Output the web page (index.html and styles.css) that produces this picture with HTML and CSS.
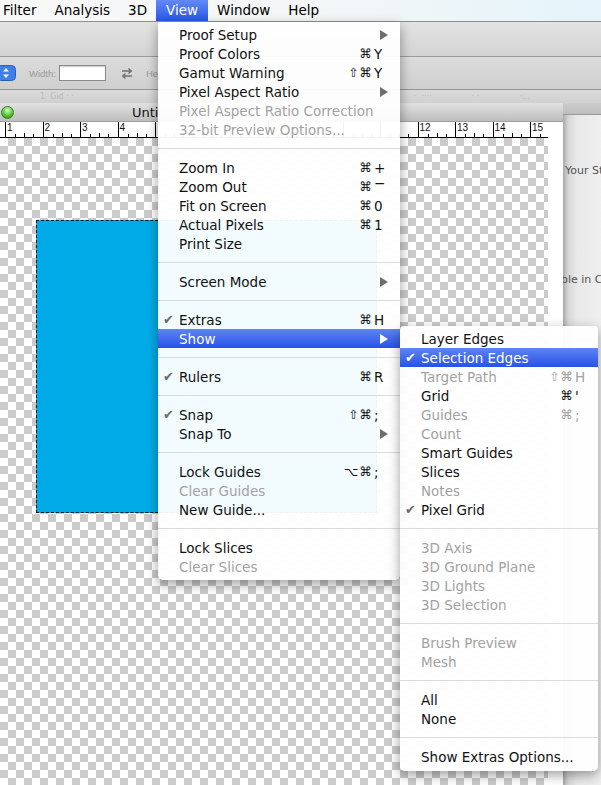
FILE: index.html
```html
<!DOCTYPE html>
<html lang="en">
<head>
    <meta charset="UTF-8">
    <title>View menu</title>
    <link rel="stylesheet" href="styles.css">
</head>
<body>
<div class="screen">

    <!-- menu bar -->
    <div class="menubar">
        <span class="mb-item first">Filter</span>
        <span class="mb-item">Analysis</span>
        <span class="mb-item">3D</span>
        <span class="mb-item active">View</span>
        <span class="mb-item">Window</span>
        <span class="mb-item">Help</span>
    </div>

    <!-- app bars -->
    <div class="appbar"></div>
    <div class="options">
        <span class="stepper">
            <svg width="20" height="16" viewBox="0 0 20 16">
                <rect x="0.5" y="0.5" width="19" height="15" rx="4" fill="#3f80e6" stroke="#2a5fb8"/>
                <polygon points="10,3 13,6.5 7,6.5" fill="#fff"/>
                <polygon points="10,13 13,9.5 7,9.5" fill="#fff"/>
            </svg>
        </span>
        <span class="opt-label">Width:</span>
        <span class="opt-field"></span>
        <span class="swap">
            <svg width="12" height="11" viewBox="0 0 12 11" fill="none" stroke="#707070" stroke-width="1.4">
                <path d="M1 3h9M7.5 0.5l2.8 2.5-2.8 2.5"/>
                <path d="M11 8H2M4.5 5.5L1.7 8l2.8 2.5"/>
            </svg>
        </span>
        <span class="opt-label">He</span>
    </div>
    <div class="tabstrip">
        <span class="ghost">1 &nbsp;Gid · ·</span>
        <span class="ghost far">· &nbsp;····</span>
        <span class="ghost">· ·</span>
        <span class="ghost">·ː..</span>
    </div>

    <!-- document window and side panel -->
    <div class="workspace">
        <div class="docwin">
            <div class="titlebar">
                <span class="light"></span>
                <span class="doc-title">Unti</span>
            </div>
            <div class="ruler-row">
                <div class="ruler">
                    <span class="cell">1</span><span class="cell">2</span><span class="cell">3</span>
                    <span class="cell">4</span><span class="cell"></span><span class="cell"></span>
                    <span class="cell"></span><span class="cell"></span><span class="cell"></span>
                    <span class="cell"></span><span class="cell"></span><span class="cell">12</span>
                    <span class="cell">13</span><span class="cell">14</span><span class="cell">15</span>
                </div>
                <div class="ruler-end"></div>
            </div>
            <div class="canvas-row">
                <div class="canvas">
                    <div class="shape"></div>
                </div>
                <div class="vscroll"></div>
            </div>
        </div>
        <div class="panel">
            <div class="panel-top"></div>
            <div class="panel-text first">Your St</div>
            <div class="panel-text second">ble in C</div>
        </div>
    </div>

    <!-- View menu -->
    <div class="menu view-menu">
        <div class="item"><span class="check"></span><span class="label">Proof Setup</span><span class="arrow"></span></div>
        <div class="item"><span class="check"></span><span class="label">Proof Colors</span><span class="keys"><span class="mod">⌘</span><span class="key">Y</span></span></div>
        <div class="item"><span class="check"></span><span class="label">Gamut Warning</span><span class="keys"><span class="mod">⇧⌘</span><span class="key">Y</span></span></div>
        <div class="item"><span class="check"></span><span class="label">Pixel Aspect Ratio</span><span class="arrow"></span></div>
        <div class="item off"><span class="check"></span><span class="label">Pixel Aspect Ratio Correction</span></div>
        <div class="item off"><span class="check"></span><span class="label">32-bit Preview Options...</span></div>
        <div class="sep"></div>
        <div class="item"><span class="check"></span><span class="label">Zoom In</span><span class="keys"><span class="mod">⌘</span><span class="key">+</span></span></div>
        <div class="item"><span class="check"></span><span class="label">Zoom Out</span><span class="keys"><span class="mod">⌘</span><span class="key raised">−</span></span></div>
        <div class="item"><span class="check"></span><span class="label">Fit on Screen</span><span class="keys"><span class="mod">⌘</span><span class="key">0</span></span></div>
        <div class="item"><span class="check"></span><span class="label">Actual Pixels</span><span class="keys"><span class="mod">⌘</span><span class="key">1</span></span></div>
        <div class="item"><span class="check"></span><span class="label">Print Size</span></div>
        <div class="sep"></div>
        <div class="item"><span class="check"></span><span class="label">Screen Mode</span><span class="arrow"></span></div>
        <div class="sep"></div>
        <div class="item"><span class="check">✔</span><span class="label">Extras</span><span class="keys"><span class="mod">⌘</span><span class="key">H</span></span></div>
        <div class="item hl"><span class="check"></span><span class="label">Show</span><span class="arrow"></span></div>
        <div class="sep"></div>
        <div class="item"><span class="check">✔</span><span class="label">Rulers</span><span class="keys"><span class="mod">⌘</span><span class="key">R</span></span></div>
        <div class="sep"></div>
        <div class="item"><span class="check">✔</span><span class="label">Snap</span><span class="keys"><span class="mod">⇧⌘</span><span class="key">;</span></span></div>
        <div class="item"><span class="check"></span><span class="label">Snap To</span><span class="arrow"></span></div>
        <div class="sep"></div>
        <div class="item"><span class="check"></span><span class="label">Lock Guides</span><span class="keys"><span class="mod">⌥⌘</span><span class="key">;</span></span></div>
        <div class="item off"><span class="check"></span><span class="label">Clear Guides</span></div>
        <div class="item"><span class="check"></span><span class="label">New Guide...</span></div>
        <div class="sep"></div>
        <div class="item"><span class="check"></span><span class="label">Lock Slices</span></div>
        <div class="item off"><span class="check"></span><span class="label">Clear Slices</span></div>
    </div>

    <!-- Show submenu -->
    <div class="menu sub-menu">
        <div class="item"><span class="check"></span><span class="label">Layer Edges</span></div>
        <div class="item hl"><span class="check">✔</span><span class="label">Selection Edges</span></div>
        <div class="item off"><span class="check"></span><span class="label">Target Path</span><span class="keys"><span class="mod">⇧⌘</span><span class="key">H</span></span></div>
        <div class="item"><span class="check"></span><span class="label">Grid</span><span class="keys"><span class="mod">⌘</span><span class="key">'</span></span></div>
        <div class="item off"><span class="check"></span><span class="label">Guides</span><span class="keys"><span class="mod">⌘</span><span class="key">;</span></span></div>
        <div class="item off"><span class="check"></span><span class="label">Count</span></div>
        <div class="item"><span class="check"></span><span class="label">Smart Guides</span></div>
        <div class="item"><span class="check"></span><span class="label">Slices</span></div>
        <div class="item off"><span class="check"></span><span class="label">Notes</span></div>
        <div class="item"><span class="check">✔</span><span class="label">Pixel Grid</span></div>
        <div class="sep"></div>
        <div class="item off"><span class="check"></span><span class="label">3D Axis</span></div>
        <div class="item off"><span class="check"></span><span class="label">3D Ground Plane</span></div>
        <div class="item off"><span class="check"></span><span class="label">3D Lights</span></div>
        <div class="item off"><span class="check"></span><span class="label">3D Selection</span></div>
        <div class="sep"></div>
        <div class="item off"><span class="check"></span><span class="label">Brush Preview</span></div>
        <div class="item off"><span class="check"></span><span class="label">Mesh</span></div>
        <div class="sep"></div>
        <div class="item"><span class="check"></span><span class="label">All</span></div>
        <div class="item"><span class="check"></span><span class="label">None</span></div>
        <div class="sep"></div>
        <div class="item"><span class="check"></span><span class="label">Show Extras Options...</span></div>
    </div>

</div>
</body>
</html>
```

FILE: styles.css
```css
* {
    box-sizing: border-box;
}
body {
    margin: 0;
    width: 601px;
    height: 785px;
    overflow: hidden;
    font-family: "DejaVu Sans", "Liberation Sans", sans-serif;
    color: #111;
}
.screen {
    position: relative;
    width: 601px;
    height: 785px;
    overflow: hidden;
    display: flex;
    flex-direction: column;
    background: #e6e6e6;
}

/* menu bar */
.menubar {
    flex: none;
    height: 22px;
    display: flex;
    background: linear-gradient(to right, #f8f8f8 0, #f3f6f7 55%, #e4f4fa 100%);
    border-bottom: 1px solid #8e8e8e;
    font-size: 13.5px;
    color: #000;
}
.mb-item {
    padding: 0 9px;
    line-height: 21px;
    white-space: nowrap;
}
.mb-item.first {
    margin-left: -6px;
}
.mb-item.active {
    padding: 0 10px;
    background: linear-gradient(#6289f4, #2856e8);
    color: #fff;
}

/* application bars */
.appbar {
    flex: none;
    height: 35px;
    background: linear-gradient(#e3e3e3, #d3d3d3);
    border-bottom: 1px solid #9c9c9c;
}
.options {
    flex: none;
    height: 33px;
    display: flex;
    align-items: center;
    background: linear-gradient(#dcdcdc, #cfcfcf);
    border-bottom: 1px solid #959595;
}
.stepper {
    display: flex;
    margin-left: -4px;
}
.opt-label {
    margin-left: 13px;
    font-family: "Liberation Sans", sans-serif;
    font-size: 9.5px;
    color: #9a9a9a;
}
.opt-field {
    width: 47px;
    height: 16px;
    margin-left: 3px;
    background: #fff;
    border: 1px solid #8c8c8c;
    box-shadow: inset 0 1px 1px rgba(0, 0, 0, 0.2);
}
.swap {
    display: flex;
    margin-left: 15px;
}
.tabstrip {
    flex: none;
    height: 13px;
    display: flex;
    align-items: center;
    gap: 40px;
    padding-left: 40px;
    background: linear-gradient(#dadada, #d0d0d0);
    font-size: 8px;
    color: #b8b8b8;
    overflow: hidden;
}
.ghost.far {
    margin-left: 300px;
}

/* document window */
.workspace {
    flex: 1;
    display: flex;
    min-height: 0;
}
.docwin {
    width: 563px;
    display: flex;
    flex-direction: column;
    background: #fff;
}
.titlebar {
    flex: none;
    height: 19px;
    display: flex;
    align-items: center;
    background: linear-gradient(#e2e2e2, #bdbdbd);
    border-bottom: 1px solid #a0a0a0;
}
.light {
    width: 13px;
    height: 13px;
    margin-left: 1px;
    border-radius: 50%;
    border: 1px solid #3f7d2e;
    background: radial-gradient(circle at 50% 30%, #e4ffd8 0, #7fdc5a 35%, #3aa624 75%, #2b7f1a 100%);
}
.doc-title {
    margin-left: 118px;
    font-size: 13px;
    color: #111;
    white-space: nowrap;
}
.ruler-row {
    flex: none;
    height: 16px;
    display: flex;
}
.ruler {
    width: 548px;
    display: flex;
    padding-left: 5px;
    overflow: hidden;
    background: #fff;
    border-bottom: 1px solid #000;
}
.cell {
    flex: none;
    width: 37.5px;
    height: 15px;
    padding-left: 1px;
    border-left: 1px solid #000;
    font-family: "Liberation Sans", sans-serif;
    font-size: 10px;
    line-height: 11px;
    background-image: linear-gradient(#000, #000), linear-gradient(#000, #000), linear-gradient(#000, #000);
    background-size: 1px 3px, 1px 4px, 1px 3px;
    background-position: 9px 100%, 18px 100%, 27px 100%;
    background-repeat: no-repeat;
}
.ruler-end {
    flex: 1;
    background: #fff;
}
.canvas-row {
    flex: 1;
    display: flex;
    min-height: 0;
}
.canvas {
    width: 548px;
    overflow: hidden;
    padding-top: 82px;
    padding-left: 36px;
    background-color: #fff;
    background-image:
        linear-gradient(45deg, #cbcbcb 25%, transparent 25%, transparent 75%, #cbcbcb 75%),
        linear-gradient(45deg, #cbcbcb 25%, transparent 25%, transparent 75%, #cbcbcb 75%);
    background-size: 16px 16px;
    background-position: 0 0, 8px 8px;
}
.shape {
    width: 341px;
    height: 293px;
    background: #00abe8;
    border: 1px dashed #111;
}
.vscroll {
    flex: 1;
    background: #fff;
}

/* side panel */
.panel {
    flex: 1;
    display: flex;
    flex-direction: column;
    overflow: hidden;
    background: linear-gradient(to right, #a8a8a8 0, #d6d6d6 5px, #e9e9e9 14px, #efefef 100%);
}
.panel-top {
    height: 12px;
    background: linear-gradient(#cdcdcd, #bdbdbd);
    border-bottom: 1px solid #9a9a9a;
}
.panel-text {
    font-size: 11px;
    color: #555;
    white-space: nowrap;
}
.panel-text.first {
    margin-top: 49px;
    padding-left: 2px;
}
.panel-text.second {
    margin-top: 96px;
    text-indent: -2px;
}

/* menus */
.menu {
    position: absolute;
    background: rgba(255, 255, 255, 0.95);
    box-shadow: 0 4px 12px rgba(0, 0, 0, 0.38);
    border-radius: 0 0 5px 5px;
    font-size: 13.5px;
}
.view-menu {
    left: 158px;
    top: 22px;
    width: 242px;
    padding: 3px 0 4px;
}
.sub-menu {
    left: 400px;
    top: 326px;
    width: 198px;
    padding: 3px 0 5px;
    border-radius: 4px 4px 5px 5px;
}
.item {
    display: flex;
    align-items: center;
    height: 19px;
    color: #111;
    white-space: nowrap;
}
.item.off {
    color: #a2a2a2;
}
.item.hl {
    background: linear-gradient(#5f84f3, #2553e7);
    color: #fff;
}
.check {
    flex: none;
    width: 21px;
    padding-left: 5px;
    font-size: 13px;
    color: #6a6a6a;
}
.item.hl .check {
    color: #fff;
}
.label {
    flex: 1;
}
.keys {
    display: flex;
    align-items: center;
    margin-right: 13px;
}
.sub-menu .keys {
    margin-right: 10px;
}
.mod {
    font-size: 12.5px;
    letter-spacing: 1px;
}
.key {
    width: 14px;
    padding-left: 1px;
}
.key.raised {
    position: relative;
    top: -4px;
}
.arrow {
    width: 0;
    height: 0;
    margin-right: 12px;
    border-left: 8px solid #6e6e6e;
    border-top: 5px solid transparent;
    border-bottom: 5px solid transparent;
}
.item.hl .arrow {
    border-left-color: #fff;
}
.sep {
    height: 19px;
    display: flex;
    align-items: center;
}
.sep::after {
    content: "";
    flex: 1;
    height: 1px;
    background: #dcdcdc;
}
```
